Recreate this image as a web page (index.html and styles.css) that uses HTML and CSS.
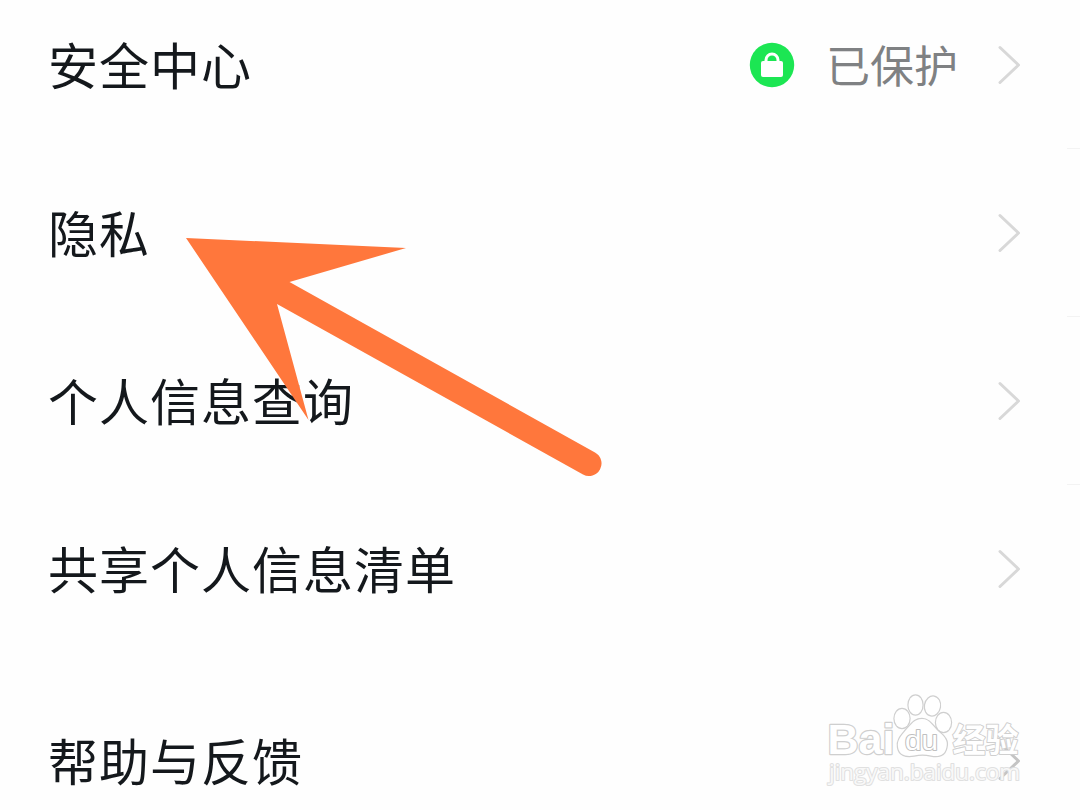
FILE: index.html
```
<!DOCTYPE html>
<html lang="zh-CN">
<head>
    <meta charset="UTF-8">
    <meta name="viewport" content="width=device-width, initial-scale=1.0">
    <title>设置</title>
    <link rel="stylesheet" href="styles.css">
</head>
<body>
    <div class="screen">
        <div class="settings-list">
            <div class="row">
                <span class="label">安全中心</span>
                <div class="status">
                    <svg class="lock" viewBox="0 0 46 46">
                        <circle cx="23" cy="23" r="22.2" fill="#1ce653"/>
                        <path d="M17 20v-2a6 6 0 0 1 12 0v2" fill="none" stroke="#fff" stroke-width="3"/>
                        <rect x="12" y="19" width="22" height="16" rx="2" fill="#fff"/>
                    </svg>
                    <span class="status-text">已保护</span>
                </div>
                <svg class="chevron" viewBox="0 0 24 40"><path d="M3 2.500L21.500 20L3 37.500"/></svg>
            </div>
            <div class="row">
                <span class="label">隐私</span>
                <svg class="chevron" viewBox="0 0 24 40"><path d="M3 2.500L21.500 20L3 37.500"/></svg>
            </div>
            <div class="row">
                <span class="label">个人信息查询</span>
                <svg class="chevron" viewBox="0 0 24 40"><path d="M3 2.500L21.500 20L3 37.500"/></svg>
            </div>
            <div class="row last">
                <span class="label">共享个人信息清单</span>
                <svg class="chevron" viewBox="0 0 24 40"><path d="M3 2.500L21.500 20L3 37.500"/></svg>
            </div>
            <div class="row last section">
                <span class="label">帮助与反馈</span>
                <svg class="chevron dark" viewBox="0 0 24 40"><path d="M3 2.500L21.500 20L3 37.500"/></svg>
            </div>
        </div>

        <svg class="arrow" viewBox="0 0 420 242">
            <path d="M1 1L221 11L104.500 45L410 215.500A12.500 12.500 0 0 1 398 237.500L92 67L123.500 183Z" fill="#ff773c"/>
        </svg>

        <svg class="watermark" viewBox="0 0 210 104">
            <g class="outlined">
                <text class="wm-bai" x="4.500" y="64" textLength="67" lengthAdjust="spacingAndGlyphs">Bai</text>
                <ellipse cx="79" cy="28.500" rx="7.500" ry="9.500"/>
                <ellipse cx="92.500" cy="15" rx="7" ry="9.500"/>
                <ellipse cx="109.500" cy="16" rx="7.500" ry="9.500" transform="rotate(10 109.500 16)"/>
                <ellipse cx="120.500" cy="32.500" rx="7.500" ry="9.500"/>
                <path d="M99 29C107 29 110 37 116 42C122 47 125 51 123.500 57C122 66 115 67 108 65.500C102 64 97 64 91 65.500C83 67 76 65 75 57C74 50 78 46 83 40C89 34 91 29 99 29Z"/>
                <text class="wm-du" x="82" y="60" textLength="33" lengthAdjust="spacingAndGlyphs">du</text>
                <text class="wm-cn" x="129.500" y="62" textLength="66" lengthAdjust="spacingAndGlyphs">经验</text>
                <text class="wm-url" x="6" y="90" textLength="191" lengthAdjust="spacingAndGlyphs">jingyan.baidu.com</text>
            </g>
        </svg>
    </div>
</body>
</html>
```
FILE: styles.css
```
body {
    margin: 0;
    background-color: #fefefe;
    font-family: "Noto Sans CJK SC", sans-serif;
}

.screen {
    position: relative;
    width: 1080px;
    height: 810px;
    overflow: hidden;
    display: flex;
}

.settings-list {
    flex: 1;
    margin-top: -19px;
}

.row {
    display: flex;
    align-items: center;
    box-sizing: border-box;
    height: 168px;
    padding: 0 59px 0 48px;
    background: linear-gradient(#f3f3f3, #f3f3f3) right bottom / 13px 1px no-repeat;
}

.row.last {
    background: none;
}

.row.section {
    margin-top: 24px;
}

.label {
    flex: 1;
    font-size: 50px;
    line-height: 60px;
    letter-spacing: 1px;
    color: #14181c;
    padding-bottom: 5px;
}

.status {
    display: flex;
    align-items: center;
    margin-right: 39px;
}

.lock {
    width: 46px;
    height: 46px;
    margin-right: 31px;
}

.status-text {
    font-size: 44px;
    line-height: 54px;
    color: #7f8183;
    padding-bottom: 3px;
}

.chevron {
    width: 24px;
    height: 40px;
}

.chevron path {
    fill: none;
    stroke: #d8d8d8;
    stroke-width: 3;
    stroke-linecap: round;
    stroke-linejoin: round;
}

.chevron.dark path {
    stroke: #c4c4c4;
}

.arrow {
    position: absolute;
    left: 185px;
    top: 237px;
    width: 420px;
    height: 242px;
}

.watermark {
    position: absolute;
    left: 823px;
    top: 690px;
    width: 210px;
    height: 104px;
}

.outlined {
    fill: #fff;
    stroke: #cfcfcf;
    stroke-width: 2;
    stroke-linejoin: round;
    paint-order: stroke;
}

.outlined ellipse,
.outlined path {
    stroke-width: 2.4;
}

.wm-bai {
    font: bold 43px "Liberation Sans", sans-serif;
    stroke-width: 2.4;
}

.wm-du {
    font: 28px "Liberation Sans", sans-serif;
    stroke: #c0c0c0;
}

.wm-cn {
    font: bold 33px "Noto Sans CJK SC", sans-serif;
}

.wm-url {
    font: 22px "Open Sans", sans-serif;
    fill-opacity: 0.8;
    stroke: #e0e0e0;
}
```
